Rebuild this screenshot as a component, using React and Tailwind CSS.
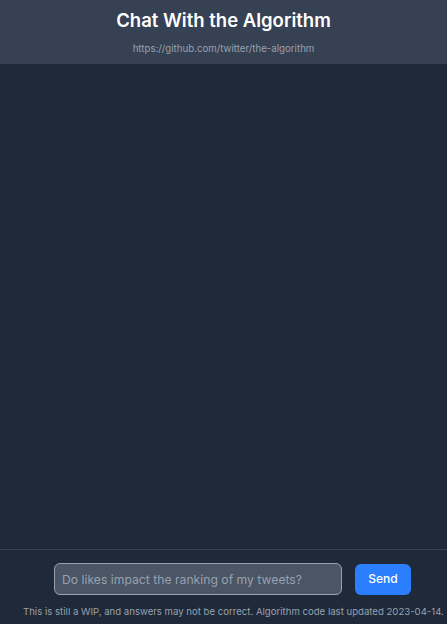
import React, { useState } from 'react';

export default function App() {
  const [question, setQuestion] = useState('');

  return (
    <div className="h-screen flex flex-col bg-gray-800 font-['Inter',sans-serif] overflow-hidden">
      {/* Header */}
      <header className="h-16 shrink-0 bg-gray-700 flex flex-col items-center pt-[8px]">
        <h1 className="text-[18.5px] leading-[24px] font-semibold text-white">Chat With the Algorithm</h1>
        <a
          href="https://github.com/twitter/the-algorithm"
          className="mt-[10px] text-[9.7px] leading-[14px] text-gray-400"
        >
          https://github.com/twitter/the-algorithm
        </a>
      </header>

      {/* Messages */}
      <main className="flex-1" />

      {/* Input */}
      <footer className="shrink-0 border-t border-gray-700 pt-[13px] pb-[6px]">
        <form
          className="flex items-center pl-[54px]"
          onSubmit={(e) => e.preventDefault()}
        >
          <input
            value={question}
            onChange={(e) => setQuestion(e.target.value)}
            placeholder="Do likes impact the ranking of my tweets?"
            className="w-[288px] h-[32px] px-[7px] rounded-md bg-gray-600 border border-gray-400 text-[12.2px] text-white placeholder-gray-400 outline-none"
          />
          <button
            type="submit"
            className="ml-[13px] w-[56px] h-[31px] rounded-md bg-blue-500 text-white text-[12px] font-medium"
          >
            Send
          </button>
        </form>
        <p className="mt-[11px] pl-[23px] text-[9.6px] leading-[12px] text-gray-400 whitespace-nowrap">
          This is still a WIP, and answers may not be correct. Algorithm code last updated 2023-04-14.
        </p>
      </footer>
    </div>
  );
}
